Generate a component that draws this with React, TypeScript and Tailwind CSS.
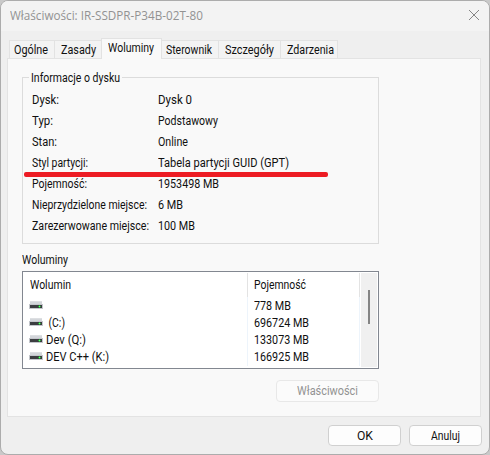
import { useLayoutEffect, useRef } from "react";

// A label condensed to a given advance width, as the dialog font is narrower than Roboto.
function Label({ text, width, className = "" }: { text: string; width: number; className?: string }) {
  const ref = useRef<HTMLSpanElement>(null);
  useLayoutEffect(() => {
    const el = ref.current;
    if (el && el.offsetWidth) el.style.transform = `scaleX(${width / el.getBoundingClientRect().width})`;
    return () => {
      if (el) el.style.transform = "";
    };
  }, [text, width]);
  return (
    <span className={`block shrink-0 ${className}`} style={{ width }}>
      <span ref={ref} className="inline-block origin-left whitespace-pre">
        {text}
      </span>
    </span>
  );
}

const info: [string, number, string, number][] = [
  ["Dysk:", 27, "Dysk 0", 34],
  ["Typ:", 21, "Podstawowy", 60],
  ["Stan:", 25, "Online", 30],
  ["Styl partycji:", 56, "Tabela partycji GUID (GPT)", 131],
  ["Pojemność:", 55, "1953498 MB", 61],
  ["Nieprzydzielone miejsce:", 115, "6 MB", 25],
  ["Zarezerwowane miejsce:", 117, "100 MB", 37],
];

const volumes: [string, number, string, number][] = [
  ["", 0, "778 MB", 37],
  [" (C:)", 19, "696724 MB", 55],
  ["Dev (Q:)", 40, "133073 MB", 55],
  ["DEV C++ (K:)", 63, "166925 MB", 55],
];

function DriveIcon() {
  return (
    <svg className="block h-[8px] w-[14px] shrink-0" viewBox="0 0 14 8" shapeRendering="crispEdges">
      <rect x="1" width="12" height="1" fill="#dddfe2" />
      <rect x="1" y="1" width="12" height="2" fill="#d3d6da" />
      <rect y="3" width="14" height="5" fill="#c3c6cb" />
      <rect x="1" y="4" width="12" height="3" fill="#3b3d40" />
      <rect x="9" y="5" width="3" height="1" fill="#24a836" />
      <rect x="10" y="4" width="1" height="3" fill="#24a836" />
      <rect x="10" y="5" width="1" height="1" fill="#63ff70" />
    </svg>
  );
}

function Tab({ text, width, className }: { text: string; width: number; className: string }) {
  return (
    <div className={`flex h-[18px] border-t border-r border-[#e2e2e2] bg-[#f3f3f3] leading-[18px] ${className}`}>
      <Label text={text} width={width} />
    </div>
  );
}

export default function App() {
  return (
    <div className="h-[455px] w-[490px] overflow-hidden bg-[#c9c9c9] font-[Roboto,sans-serif] text-[12px] text-[#101010]">
      <div className="flex h-[455px] flex-col overflow-hidden rounded-[8px] border border-[#acacac] bg-[#efefef]">
        <div className="flex h-[30px] shrink-0 items-center justify-between bg-[#f3f3f3] pr-[9px] pl-[9px] font-['Open_Sans',sans-serif] text-[12px] text-[#929292]">
          <Label text="Właściwości: IR-SSDPR-P34B-02T-80" width={193} />
          <svg className="-mt-[2px] h-[12px] w-[12px]" viewBox="0 0 12 12" stroke="#858585" strokeWidth="1">
            <path d="M1 1l10 10M11 1L1 11" />
          </svg>
        </div>

        <div className="relative z-10 -mb-px flex h-[28px] shrink-0 items-end pb-px pl-[8px]">
          <Tab text="Ogólne" width={34} className="w-[46px] border-l pl-[4px]" />
          <Tab text="Zasady" width={35} className="w-[46px] border-r-0 pl-[6px]" />
          <div className="-mb-px h-[21px] w-[61px] border border-b-0 border-[#e2e2e2] bg-[#f9f9f9] pl-[6px] leading-[18px]">
            <Label text="Woluminy" width={46} />
          </div>
          <Tab text="Sterownik" width={46} className="w-[57px] pl-[4px]" />
          <Tab text="Szczegóły" width={49} className="w-[62px] pl-[6px]" />
          <Tab text="Zdarzenia" width={47} className="w-[57px] pl-[6px]" />
        </div>

        <div className="ml-[6px] flex h-[359px] w-[474px] shrink-0 flex-col border border-[#e3e3e3] bg-[#f9f9f9] pl-[14px]">
          <fieldset className="relative mt-[18px] h-[167px] w-[357px] border border-[#dcdcdc] pt-[12px] pl-[9px]">
            <div className="absolute -top-[7px] left-[6px] bg-[#f9f9f9] px-[2px] leading-[14px]">
              <Label text="Informacje o dysku" width={89} />
            </div>
            {info.map(([name, nw, value, vw]) => (
              <div key={name} className="flex h-[21px] leading-[21px]">
                <div className="w-[126px]">
                  <Label text={name} width={nw} />
                </div>
                <Label text={value} width={vw} />
              </div>
            ))}
            <div className="absolute top-[94px] left-px h-[5px] w-[304px] rounded-[2px] bg-[#ed1c24]" />
          </fieldset>

          <div className="mt-[9px] h-[18px] leading-[14px]">
            <Label text="Woluminy" width={46} />
          </div>

          <div className="flex h-[98px] w-[357px] shrink-0 border border-[#828790] bg-white p-px">
            <div className="flex w-[336px] flex-col">
              <div className="flex h-[24px] leading-[24px]">
                <div className="w-[224px] border-r border-[#e3e3e3] pl-[6px]">
                  <Label text="Wolumin" width={41} />
                </div>
                <div className="w-[112px] border-r border-[#e3e3e3] pl-[6px]">
                  <Label text="Pojemność" width={52} />
                </div>
              </div>
              <div className="flex flex-1 flex-col">
                {volumes.map(([name, nw, size, sw]) => (
                  <div key={size} className="flex h-[17px] leading-[19px] last:h-[18px]">
                    <div className="flex w-[224px] items-start border-r border-[#edf4fb] pl-[5px]">
                      <div className="pt-[4px]">
                        <DriveIcon />
                      </div>
                      {name && <Label text={name} width={nw} className="ml-[3px]" />}
                    </div>
                    <div className="w-[112px] border-r border-[#edf4fb] pl-[6px]">
                      <Label text={size} width={sw} />
                    </div>
                  </div>
                ))}
              </div>
            </div>
            <div className="ml-px w-[16px] bg-[#f0f0f0] pt-[17px] pl-[7px]">
              <div className="h-[34px] w-[2px] bg-[#858585]" />
            </div>
          </div>

          <div className="mt-[11px] flex w-[357px] justify-end">
            <button className="flex h-[22px] w-[103px] items-center justify-center rounded-[4px] border border-[#e8e8e8] bg-[#fbfbfb] text-[#929292]">
              <Label text="Właściwości" width={61} className="text-left" />
            </button>
          </div>
        </div>

        <div className="flex gap-[8px] pt-[8px] pl-[327px]">
          <button className="flex h-[21px] w-[73px] items-center justify-center rounded-[4px] border border-[#d0d0d0] bg-[#fdfdfd]">
            <Label text="OK" width={16} className="text-left" />
          </button>
          <button className="flex h-[21px] w-[73px] items-center justify-center rounded-[4px] border border-[#d0d0d0] bg-[#fdfdfd]">
            <Label text="Anuluj" width={29} className="text-left" />
          </button>
        </div>
      </div>
    </div>
  );
}
